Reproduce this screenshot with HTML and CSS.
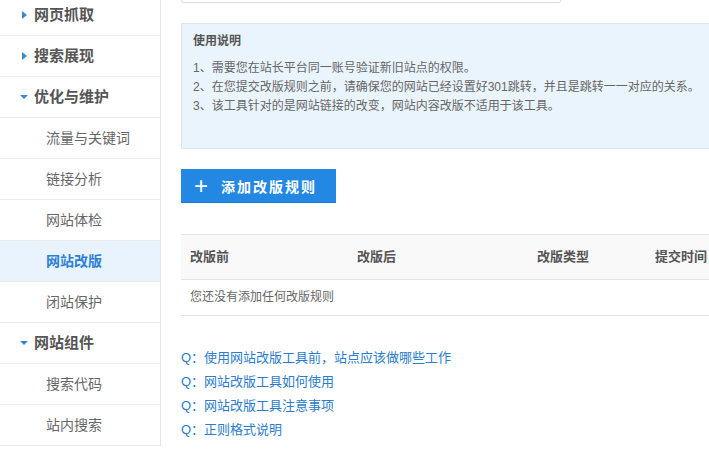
FILE: index.html
```html
<!DOCTYPE html>
<html lang="zh-CN">
<head>
    <meta charset="UTF-8">
    <title>网站改版</title>
    <link rel="stylesheet" href="styles.css">
</head>
<body>
    <div class="page">
        <!-- 左侧导航 -->
        <ul class="side-nav">
            <li class="group closed">网页抓取</li>
            <li class="group closed">搜索展现</li>
            <li class="group open">优化与维护</li>
            <li class="item">流量与关键词</li>
            <li class="item">链接分析</li>
            <li class="item">网站体检</li>
            <li class="item active">网站改版</li>
            <li class="item">闭站保护</li>
            <li class="group open">网站组件</li>
            <li class="item">搜索代码</li>
            <li class="item">站内搜索</li>
        </ul>

        <div class="main">
            <div class="search-box"></div>

            <div class="notice">
                <h3>使用说明</h3>
                <ul>
                    <li>1、需要您在站长平台同一账号验证新旧站点的权限。</li>
                    <li>2、在您提交改版规则之前，请确保您的网站已经设置好301跳转，并且是跳转一一对应的关系。</li>
                    <li>3、该工具针对的是网站链接的改变，网站内容改版不适用于该工具。</li>
                </ul>
            </div>

            <a class="add-btn" href="#"><span class="plus">+</span>添加改版规则</a>

            <div class="rule-table">
                <div class="row head">
                    <span>改版前</span>
                    <span>改版后</span>
                    <span>改版类型</span>
                    <span>提交时间</span>
                </div>
                <div class="row empty">您还没有添加任何改版规则</div>
            </div>

            <ul class="faq">
                <li><a href="#">Q：使用网站改版工具前，站点应该做哪些工作</a></li>
                <li><a href="#">Q：网站改版工具如何使用</a></li>
                <li><a href="#">Q：网站改版工具注意事项</a></li>
                <li><a href="#">Q：正则格式说明</a></li>
            </ul>
        </div>
    </div>
</body>
</html>
```

FILE: styles.css
```css
body {
    margin: 0;
    padding: 0;
    overflow: hidden;
    background: #fff;
    font-family: "Liberation Sans", "Noto Sans CJK SC", sans-serif;
    color: #666;
}

ul {
    margin: 0;
    padding: 0;
    list-style: none;
}

a {
    text-decoration: none;
}

/* page is scrolled a little */
.page {
    display: flex;
    margin-top: -5px;
}

/* Side navigation */
.side-nav {
    width: 160px;
    flex-shrink: 0;
    border-right: 1px solid #e6e6e6;
}

.side-nav li {
    height: 40px;
    line-height: 40px;
    border-bottom: 1px solid #ebebeb;
}

.side-nav .group {
    position: relative;
    padding-left: 34px;
    font-size: 15px;
    font-weight: bold;
    color: #555;
}

.side-nav .group::before {
    content: "";
    position: absolute;
    top: 50%;
}

.side-nav .closed::before {
    left: 22px;
    margin-top: -4px;
    border-left: 5px solid #3b86cf;
    border-top: 4px solid transparent;
    border-bottom: 4px solid transparent;
}

.side-nav .open::before {
    left: 20px;
    margin-top: -2px;
    border-top: 4px solid #3b86cf;
    border-left: 4px solid transparent;
    border-right: 4px solid transparent;
}

.side-nav .item {
    padding-left: 46px;
    font-size: 14px;
    color: #666;
}

.side-nav .active {
    background: #e9f3fd;
    color: #2b7fd8;
    font-weight: bold;
}

/* Main column */
.main {
    width: 560px;
    flex-shrink: 0;
    padding-left: 20px;
}

.search-box {
    width: 378px;
    height: 36px;
    margin-top: -30px;
    border: 1px solid #dedede;
    border-radius: 2px;
}

.notice {
    margin-top: 20px;
    height: 124px;
    width: 600px;
    background: #eaf4fd;
    border: 1px solid #d8e6f2;
    padding: 0 11px;
    font-size: 12px;
}

.notice h3 {
    margin: 7px 0 0;
    line-height: 20px;
    font-size: 12px;
    color: #555;
}

.notice ul {
    margin-top: 8px;
}

.notice li {
    line-height: 19px;
    color: #666;
}

.add-btn {
    display: flex;
    align-items: center;
    margin-top: 20px;
    width: 155px;
    height: 34px;
    background: #2288e3;
    border-bottom: 1px solid #1a78cf;
    box-sizing: border-box;
    color: #fff;
    font-size: 14px;
    font-weight: bold;
    letter-spacing: 2px;
}

.add-btn .plus {
    width: 40px;
    text-align: center;
    font-size: 24px;
    font-weight: normal;
    letter-spacing: 0;
    line-height: 30px;
}

/* Rules table */
.rule-table {
    margin-top: 31px;
    width: 600px;
    border-top: 1px solid #e4e4e4;
}

.rule-table .row {
    display: grid;
    grid-template-columns: 167px 180px 118px 1fr;
    padding-left: 9px;
    border-bottom: 1px solid #e4e4e4;
}

.rule-table .head {
    height: 44px;
    line-height: 44px;
    background: #f9f9f9;
    font-size: 13px;
    font-weight: bold;
    color: #555;
}

.rule-table .empty {
    display: block;
    height: 35px;
    line-height: 35px;
    font-size: 12px;
    color: #666;
}

.faq {
    margin-top: 30px;
}

.faq li {
    line-height: 24px;
    font-size: 13px;
}

.faq a {
    color: #2a7ccc;
}
```
